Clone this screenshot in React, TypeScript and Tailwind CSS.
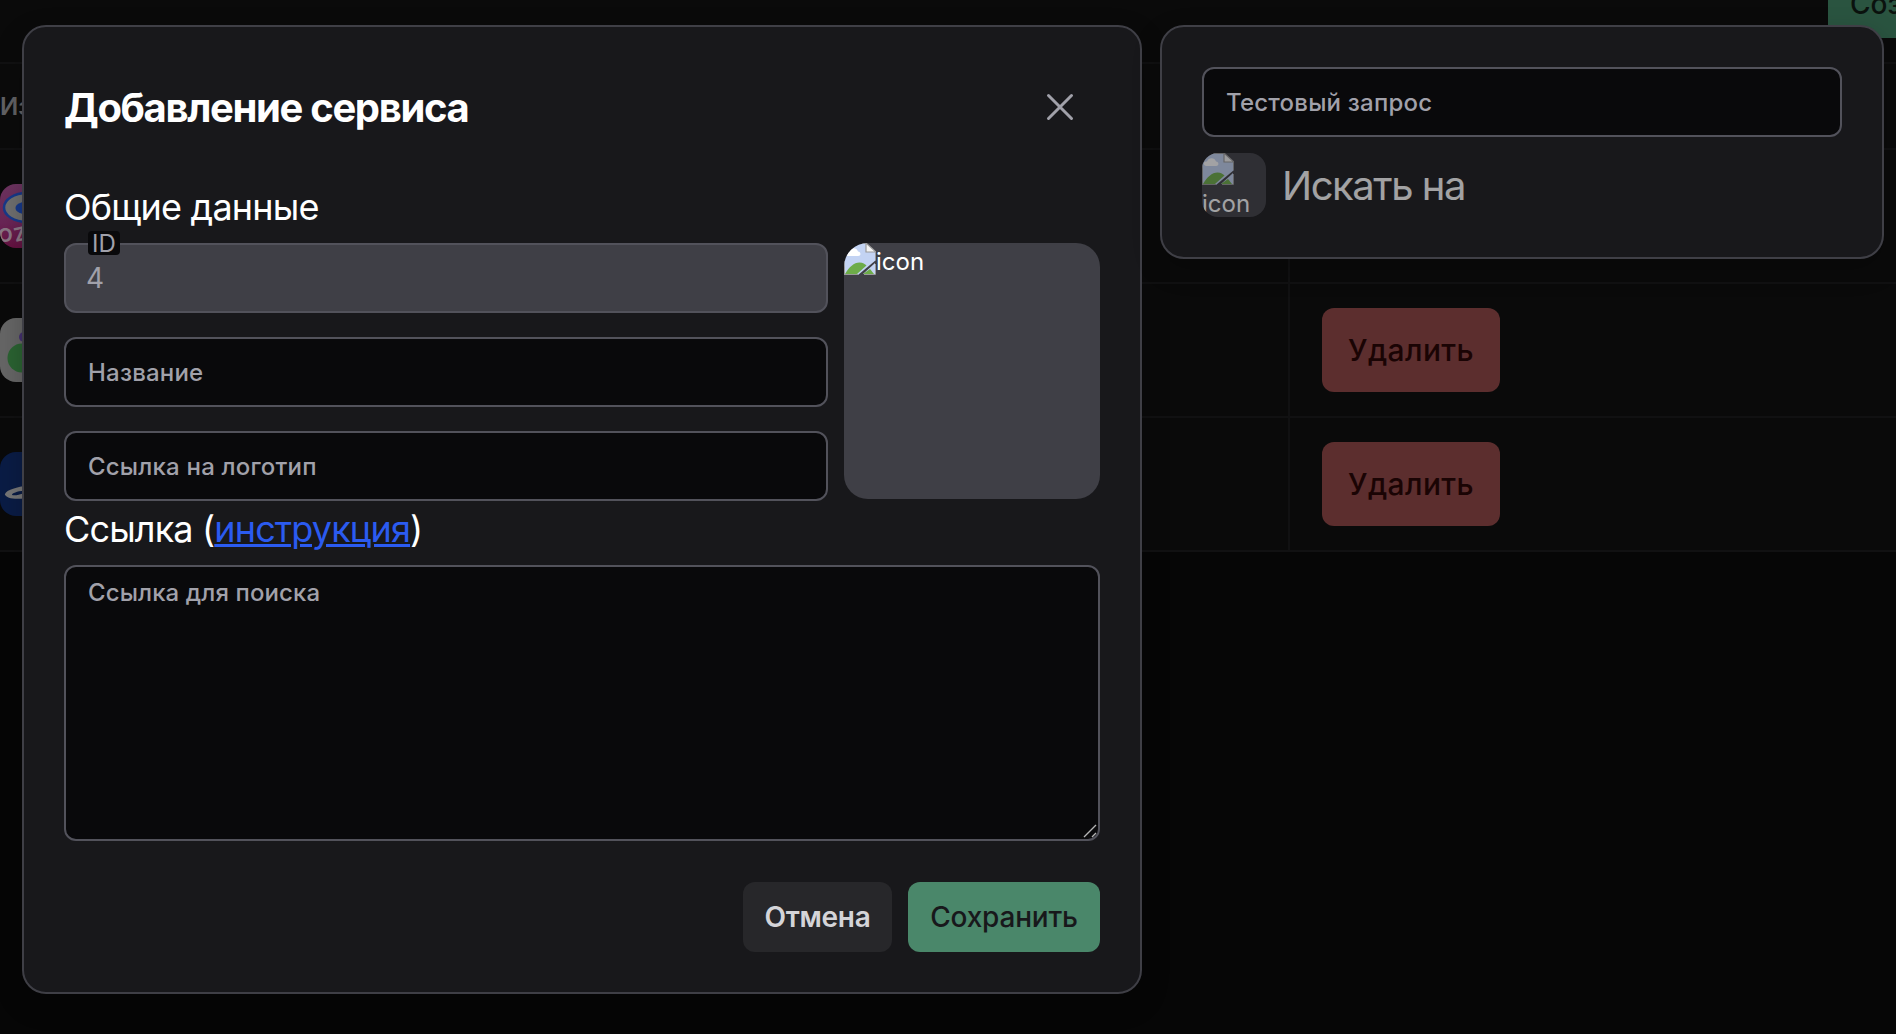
import React from "react";

function BrokenImage({ className = "" }: { className?: string }) {
  return (
    <svg viewBox="0 0 32 32" className={`h-8 w-8 shrink-0 ${className}`}>
      <path d="M0 0H22L32 9V17L14 32H0Z" fill="#c3d3f3" />
      <path d="M4 13C1 12 1 8 5 8.500C6 4 13 4 14 8.500C17 8.500 17.500 13 14 13Z" fill="#fff" />
      <path d="M1 31C5 24 10 19.500 15.500 19.500C19 19.500 21 21 22.500 22.500L13 31Z" fill="#6dac49" />
      <path d="M31 20V31H19Z" fill="#c3d3f3" />
      <path d="M19 31L26 26L30 31Z" fill="#6dac49" />
      <path d="M22 0V9H32Z" fill="#f4f4f4" stroke="#999" strokeWidth="1.200" />
      <path d="M.5 32V.5H22M31.500 9V17M14 31.500H.5M20 31.500H31.500V21" fill="none" stroke="#999" strokeWidth="1" />
    </svg>
  );
}

function Field({ label }: { label: string }) {
  return (
    <div className="flex h-[70px] items-center rounded-[12px] border-2 border-[#52525b] bg-[#09090b] px-[22px] pt-px text-[24px] font-medium tracking-[0.2px] text-[#a1a1aa]">
      {label}
    </div>
  );
}

function OzonLogo() {
  return (
    <svg viewBox="0 0 64 64" className="h-16 w-16 rounded-2xl">
      <defs>
        <linearGradient id="ozon" x1="0" y1="0" x2="0" y2="1">
          <stop stopColor="#6d3460" />
          <stop offset=".6" stopColor="#6a2556" />
          <stop offset="1" stopColor="#641140" />
        </linearGradient>
      </defs>
      <rect width="64" height="64" fill="url(#ozon)" />
      <ellipse cx="27" cy="23.500" rx="23" ry="14.500" fill="#6f6f6f" stroke="#17398a" strokeWidth="2.500" />
      <ellipse cx="27" cy="24" rx="11.500" ry="6.500" fill="#17398a" />
      <text x="-2" y="58" fontSize="19" fontWeight="700" fill="#8a7784" fontFamily="Inter, sans-serif">O</text>
      <text x="14" y="57" fontSize="19" fontWeight="700" fill="#8a7784" fontFamily="Inter, sans-serif" transform="rotate(-12 20 50)">Z</text>
    </svg>
  );
}

function GreenLogo() {
  return (
    <svg viewBox="0 0 64 64" className="h-16 w-16 rounded-2xl">
      <rect width="64" height="64" fill="#666" />
      <circle cx="22" cy="40" r="14.500" fill="#2b6332" />
      <circle cx="24" cy="19" r="5" fill="#44306f" />
    </svg>
  );
}

function BlueLogo() {
  return (
    <svg viewBox="0 0 64 64" className="h-16 w-16 rounded-2xl">
      <rect width="64" height="64" fill="#0a1c45" />
      <path d="M24 34C13 36 5 39 5 42.500C6 46 13 47.500 24 46.500Z" fill="#777" />
      <path d="M24 38.500C17 39.500 12 41 12 43C15 44 19 42.500 24 41.500Z" fill="#0a1c45" />
    </svg>
  );
}

function Row({ logo, action = true }: { logo: React.ReactNode; action?: boolean }) {
  return (
    <div className="flex h-[134px] border-b-2 border-[#111112]">
      <div className="flex w-[1290px] items-center border-r-2 border-[#111112]">{logo}</div>
      <div className="flex items-center pl-8">
        {action && (
          <button className="h-[84px] w-[178px] rounded-[12px] bg-[#5c2e2e] pt-px text-[30px] font-medium tracking-[0.4px] text-[#1a0404]">Удалить</button>
        )}
      </div>
    </div>
  );
}

export default function App() {
  return (
    <div className="relative h-[1034px] w-[1896px] overflow-hidden bg-[#060606] font-[Inter,sans-serif]">
      <div className="flex h-16 items-start justify-end border-b-2 border-[#111112] bg-[#0a0a0a]">
        <div className="h-[38px] w-[68px] overflow-hidden bg-[#2a5440] pl-[22px] text-[28px] leading-[8px] font-medium text-[#0b120e]">Создать</div>
      </div>
      <div className="flex h-[86px] items-center border-b-2 border-[#111112] bg-[#0b0b0b] pt-[2px] text-[24px] font-semibold text-[#616164]">
        <span className="w-10 overflow-hidden">Изображение</span>
      </div>
      <div className="bg-[#0a0a0a]">
        <Row logo={<OzonLogo />} action={false} />
        <Row logo={<GreenLogo />} />
        <Row logo={<BlueLogo />} />
      </div>

      <div className="absolute inset-0 flex items-start gap-[18px] pt-[25px] pl-[22px]">
        <section className="flex h-[969px] w-[1120px] flex-col rounded-[24px] border-2 border-[#3f3f46] bg-[#18181b] px-10 pt-10 text-white shadow-[0_10px_28px_rgba(0,0,0,0.22)]">
          <header className="flex h-20 items-center justify-between pr-[26px]">
            <h2 className="pt-px text-[40px] font-bold tracking-[-1.35px]">Добавление сервиса</h2>
            <svg viewBox="0 0 28 28" className="h-7 w-7" stroke="#a1a1aa" strokeWidth="3" strokeLinecap="round">
              <path d="M2.500 2.500L25.500 25.500M25.500 2.500L2.500 25.500" />
            </svg>
          </header>
          <h3 className="mt-[36px] h-[60px] text-[36px] leading-[48px] tracking-[-0.8px]">Общие данные</h3>
          <div className="flex gap-4">
            <div className="flex flex-1 flex-col gap-6">
              <div className="relative flex h-[70px] items-center rounded-[12px] border-2 border-[#52525b] bg-[#3f3f46] px-5 text-[28px] text-[#a1a1aa]">
                <span className="absolute -top-[14px] left-[22px] flex h-6 w-[32px] items-center justify-center rounded-[4px] bg-[#09090b] pt-px text-[24px]">ID</span>
                4
              </div>
              <Field label="Название" />
              <Field label="Ссылка на логотип" />
            </div>
            <div className="flex h-64 w-64 items-start overflow-hidden rounded-[24px] bg-[#3f3f46] text-[24px] leading-[37px]">
              <BrokenImage />
              icon
            </div>
          </div>
          <h3 className="h-[64px] text-[36px] leading-[57px] tracking-[-0.85px]">
            Ссылка (<a className="text-[#2b5bf0] underline decoration-[3px]">инструкция</a>)
          </h3>
          <div className="relative h-[276px] rounded-[12px] border-2 border-[#52525b] bg-[#09090b] px-[22px] pt-[8px] text-[24px] leading-[36px] font-medium tracking-[0.1px] text-[#a1a1aa]">
            Ссылка для поиска
            <svg viewBox="0 0 14 14" className="absolute right-[1px] bottom-[1px] h-[14px] w-[14px]" stroke="#b5b5b5" strokeWidth="1.400">
              <path d="M1 13L13 1M9 13L13 9" />
            </svg>
          </div>
          <footer className="mt-[41px] flex justify-end gap-4 text-[28px]">
            <button className="h-[70px] w-[149px] rounded-[12px] bg-[#27272a] font-semibold tracking-[-0.3px] text-[#d4d4d8]">Отмена</button>
            <button className="h-[70px] w-[192px] rounded-[12px] bg-[#4a876a] font-medium tracking-[-0.2px] text-[#18181b]">Сохранить</button>
          </footer>
        </section>

        <aside className="flex h-[234px] w-[724px] flex-col gap-4 rounded-[24px] border-2 border-[#3f3f46] bg-[#18181b] p-10 shadow-[0_10px_28px_rgba(0,0,0,0.22)]">
          <Field label="Тестовый запрос" />
          <div className="flex items-center gap-4 opacity-60">
            <div className="h-16 w-16 overflow-hidden rounded-2xl bg-[#3f3f46] text-[24px] leading-[38px] text-white">
              <BrokenImage className="block" />
              icon
            </div>
            <span className="pt-[2px] text-[40px] tracking-[-1.45px] text-white">Искать на</span>
          </div>
        </aside>
      </div>
    </div>
  );
}
